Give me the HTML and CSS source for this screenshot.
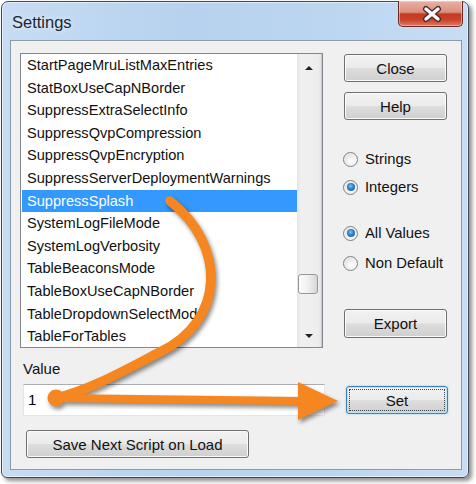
FILE: index.html
```html
<!DOCTYPE html>
<html lang="en">
<head>
    <meta charset="UTF-8">
    <title>Settings</title>
    <link rel="stylesheet" href="styles.css">
</head>
<body>
    <div class="window">
        <div class="titlebar">
            <span class="title">Settings</span>
            <div class="close-btn">
                <svg width="65" height="26" viewBox="0 0 65 26">
                    <path d="M27 9 L39 19 M39 9 L27 19" stroke="#4a2a28" stroke-width="6" stroke-linecap="round"/>
                    <path d="M27 9 L39 19 M39 9 L27 19" stroke="#ffffff" stroke-width="3.4" stroke-linecap="round"/>
                </svg>
            </div>
        </div>
        <div class="client">
            <div class="top-row">
                <div class="listbox">
                    <div class="items">
                        <div class="item">StartPageMruListMaxEntries</div>
                        <div class="item">StatBoxUseCapNBorder</div>
                        <div class="item">SuppressExtraSelectInfo</div>
                        <div class="item">SuppressQvpCompression</div>
                        <div class="item">SuppressQvpEncryption</div>
                        <div class="item">SuppressServerDeploymentWarnings</div>
                        <div class="item selected">SuppressSplash</div>
                        <div class="item">SystemLogFileMode</div>
                        <div class="item">SystemLogVerbosity</div>
                        <div class="item">TableBeaconsMode</div>
                        <div class="item">TableBoxUseCapNBorder</div>
                        <div class="item">TableDropdownSelectMode</div>
                        <div class="item">TableForTables</div>
                    </div>
                    <div class="scrollbar">
                        <div class="sb-btn"><span class="arrow-up"></span></div>
                        <div class="sb-track"><div class="sb-thumb"></div></div>
                        <div class="sb-btn"><span class="arrow-down"></span></div>
                    </div>
                </div>
                <div class="side">
                    <div class="btn btn-close">Close</div>
                    <div class="btn btn-help">Help</div>
                    <div class="radio first"><span class="dot"></span>Strings</div>
                    <div class="radio"><span class="dot checked"></span>Integers</div>
                    <div class="radio group"><span class="dot checked"></span>All Values</div>
                    <div class="radio tight"><span class="dot"></span>Non Default</div>
                    <div class="btn btn-export">Export</div>
                </div>
            </div>
            <div class="value-label">Value</div>
            <div class="value-row">
                <div class="value-input">1</div>
                <div class="btn btn-set">Set</div>
            </div>
            <div class="btn btn-save">Save Next Script on Load</div>
        </div>
    </div>

    <svg class="overlay" width="476" height="484" viewBox="0 0 476 484">
        <g class="arrow">
            <path d="M170 201 C226 245 226 320 160 352 C125 370 90 390 56 398" fill="none" stroke="#f6861f" stroke-width="9.5" stroke-linecap="round"/>
            <path d="M56 398 L302 401" fill="none" stroke="#f6861f" stroke-width="8"/>
            <polygon points="298,382 338,401 298,420" fill="#f6861f"/>
            <circle cx="56" cy="398" r="8.5" fill="#f6861f"/>
        </g>
    </svg>
</body>
</html>
```

FILE: styles.css
```css
body {
    margin: 0;
    width: 476px;
    height: 484px;
    position: relative;
    overflow: hidden;
    background-color: #ffffff;
    font-family: 'Liberation Sans', Arial, sans-serif;
    font-size: 14.8px;
    color: #000;
}

.window {
    margin: 1px 0 0 1px;
    width: 468px;
    height: 477px;
    box-sizing: border-box;
    border: 1px solid #3f4a57;
    border-radius: 7px 7px 6px 6px;
    background: linear-gradient(90deg, #c6dcf2 0%, #b7d2ee 40%, #bcd6f0 70%, #c8ddf3 100%);
    box-shadow: 3px 3px 4px rgba(0, 0, 0, 0.45), inset 0 0 0 1px rgba(255, 255, 255, 0.55);
    padding: 0 6px 7px 8px;
    display: flex;
    flex-direction: column;
}

.titlebar {
    height: 38px;
    display: flex;
    justify-content: space-between;
    align-items: flex-start;
}

.title {
    font-size: 16.5px;
    color: #1c2633;
    margin: 11px 0 0 2px;
    text-shadow: 0 0 6px rgba(255, 255, 255, 0.9);
}

.close-btn {
    width: 65px;
    height: 26px;
    margin: -1px -1px 0 0;
    box-sizing: border-box;
    border: 1px solid #6b2a24;
    border-top: none;
    border-radius: 0 0 5px 5px;
    background: linear-gradient(180deg, #eab0a4 0%, #dc8f80 45%, #c5391f 52%, #c8432a 75%, #dc7b63 100%);
    box-shadow: inset 0 0 0 1px rgba(255, 220, 210, 0.5);
}

.close-btn svg {
    display: block;
    margin-top: -1px;
}

.client {
    flex: 1;
    background-color: #f0f0f0;
    border: 1px solid #8d9aa8;
    padding: 12px 0 0 9px;
}

.top-row {
    display: flex;
}

.listbox {
    width: 303px;
    height: 295px;
    box-sizing: border-box;
    border: 1px solid #82878f;
    background-color: #fff;
    display: flex;
}

.items {
    flex: 1;
    overflow: hidden;
}

.item {
    height: 22.6px;
    line-height: 22.6px;
    padding-left: 5px;
    margin-left: 1px;
    white-space: nowrap;
    font-size: 14.6px;
    color: #111;
}

.item.selected {
    background-color: #3399ff;
    color: #fff;
}

.scrollbar {
    width: 24px;
    display: flex;
    flex-direction: column;
    background: linear-gradient(90deg, #e4e4e4 0%, #f0f0f0 15%, #eeeeee 85%, #e6e6e6 100%);
    border-right: 1px solid #c8c8c8;
}

.sb-btn {
    height: 23px;
    display: flex;
    align-items: center;
    justify-content: center;
}

.arrow-up {
    margin-top: 5px;
    border-left: 4px solid transparent;
    border-right: 4px solid transparent;
    border-bottom: 4px solid #222;
}

.arrow-down {
    border-left: 4px solid transparent;
    border-right: 4px solid transparent;
    border-top: 4px solid #222;
}

.sb-track {
    flex: 1;
}

.sb-thumb {
    margin: 197px 0 0 1px;
    width: 20px;
    height: 20px;
    box-sizing: border-box;
    border: 1px solid #979797;
    border-radius: 3px;
    background: linear-gradient(90deg, #fdfdfd 0%, #f0f0f0 50%, #d6d6d6 100%);
}

.side {
    margin-left: 21px;
    width: 103px;
    display: flex;
    flex-direction: column;
}

.btn {
    box-sizing: border-box;
    height: 28px;
    border: 1px solid #707070;
    border-radius: 3px;
    background: linear-gradient(180deg, #f2f2f2 0%, #ebebeb 48%, #dddddd 52%, #cfcfcf 100%);
    box-shadow: inset 0 0 0 1px #fbfbfb;
    display: flex;
    align-items: center;
    justify-content: center;
    font-size: 15px;
    color: #111;
}

.btn-close {
    margin-top: 1px;
}

.btn-help {
    margin-top: 10px;
}

.radio {
    height: 28px;
    display: flex;
    align-items: center;
    color: #111;
}

.radio.first {
    margin-top: 25px;
}

.radio.group {
    margin-top: 18px;
}

.radio.tight {
    margin-top: 2px;
}

.dot {
    width: 15px;
    height: 15px;
    box-sizing: border-box;
    border-radius: 50%;
    border: 1px solid #7f7f7f;
    background: radial-gradient(circle at 60% 65%, #ffffff 0%, #eeeeee 45%, #c9c9c9 100%);
    box-shadow: inset 0 0 0 1px #f6f6f6;
    margin: 0 7px 0 -1px;
    display: flex;
    align-items: center;
    justify-content: center;
}

.dot.checked::after {
    content: "";
    width: 8px;
    height: 8px;
    border-radius: 50%;
    background: radial-gradient(circle at 45% 40%, #7ccaff 0%, #2f86d0 40%, #144f8a 100%);
}

.btn-export {
    margin-top: 32px;
    height: 29px;
}

.value-label {
    margin: 12px 0 0 3px;
    line-height: 18px;
    font-size: 15px;
    color: #111;
}

.value-row {
    display: flex;
    align-items: center;
    margin-top: 6px;
}

.value-input {
    margin-left: 3px;
    width: 302px;
    height: 32px;
    box-sizing: border-box;
    background-color: #fff;
    border: 1px solid #e2e6ec;
    border-top-color: #abadb3;
    padding-left: 4px;
    line-height: 30px;
    font-size: 15px;
}

.btn-set {
    margin-left: 21px;
    width: 102px;
    border-color: #3c7fb1;
    box-shadow: inset 0 0 0 1px #bfe4f7, 0 0 2px rgba(60, 160, 220, 0.5);
    position: relative;
}

.btn-set::after {
    content: "";
    position: absolute;
    top: 2px;
    left: 2px;
    right: 2px;
    bottom: 2px;
    border: 1px dotted #444;
}

.btn-save {
    margin: 14px 0 0 6px;
    width: 223px;
}

.overlay {
    position: absolute;
    top: 0;
    left: 0;
    pointer-events: none;
}

.arrow {
    filter: drop-shadow(2px 3px 2px rgba(0, 0, 0, 0.45));
}
```
